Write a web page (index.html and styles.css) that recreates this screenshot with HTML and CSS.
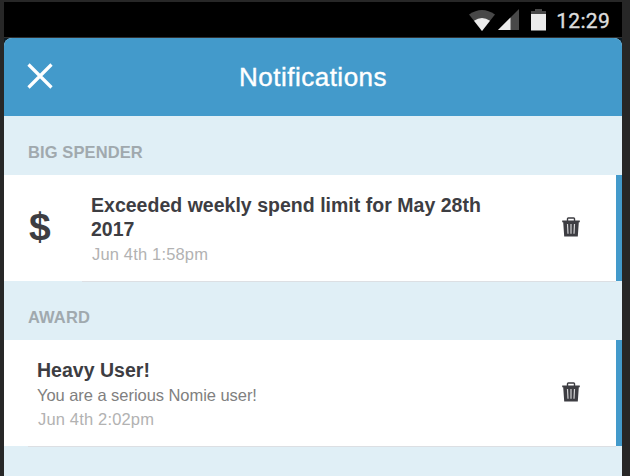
FILE: index.html
```html
<!DOCTYPE html>
<html lang="en">
<head>
    <meta charset="UTF-8">
    <meta name="viewport" content="width=device-width, initial-scale=1.0">
    <title>Notifications</title>
    <link rel="stylesheet" href="styles.css">
</head>
<body>
    <div class="phone">
        <div class="status-bar">
            <svg class="wifi" width="26" height="21" viewBox="0 0 26 21">
                <path fill="#484848" d="M0 4.5Q13 -4.5 26 4.5L13 21z"/>
                <path fill="#ebebeb" d="M5 10.8Q13 5.4 21 10.8L13 21z"/>
            </svg>
            <svg class="signal" width="21" height="21" viewBox="0 0 21 21">
                <path fill="#484848" d="M21 0V21H0z"/>
                <path fill="#ebebeb" d="M12.5 8.5V21H0z"/>
            </svg>
            <svg class="battery" width="15" height="22" viewBox="0 0 15 22">
                <path fill="#484848" d="M0 2h4V0h7v2h4v4H0z"/>
                <path fill="#ebebeb" d="M0 5h15v16.5H0z"/>
            </svg>
            <span class="clock">12:29</span>
        </div>
        <div class="screen">
            <header>
                <svg class="close" width="26" height="26" viewBox="0 0 26 26">
                    <path d="M1.5 1.5L24.5 24.5M24.5 1.5L1.5 24.5" stroke="#fff" stroke-width="3.2"/>
                </svg>
                <h1>Notifications</h1>
            </header>
            <section>
                <h2>BIG SPENDER</h2>
                <div class="item with-icon">
                    <div class="icon">$</div>
                    <div class="text">
                        <h3>Exceeded weekly spend limit for May 28th 2017</h3>
                        <p class="date">Jun 4th 1:58pm</p>
                    </div>
                    <svg class="trash" width="18" height="20" viewBox="0 0 18 20">
                        <path d="M5.5 4V1.8Q5.5 1 6.3 1h5.4q.8 0 .8.8V4" fill="none" stroke="#3d3d42" stroke-width="1.4"/>
                        <path d="M.2 3.4h17.6v1.8h-1L15.8 19.5H2.2L1.2 5.2h-1z" fill="#3d3d42"/>
                        <path d="M5.5 7l.5 9.8M9 7v9.8M12.5 7L12 16.8" stroke="#d4d4d6" stroke-width="1.2"/>
                    </svg>
                </div>
                <div class="line inset"></div>
            </section>
            <section>
                <h2 class="after-line">AWARD</h2>
                <div class="item">
                    <div class="text">
                        <h3>Heavy User!</h3>
                        <p class="desc">You are a serious Nomie user!</p>
                        <p class="date">Jun 4th 2:02pm</p>
                    </div>
                    <svg class="trash" width="18" height="20" viewBox="0 0 18 20">
                        <path d="M5.5 4V1.8Q5.5 1 6.3 1h5.4q.8 0 .8.8V4" fill="none" stroke="#3d3d42" stroke-width="1.4"/>
                        <path d="M.2 3.4h17.6v1.8h-1L15.8 19.5H2.2L1.2 5.2h-1z" fill="#3d3d42"/>
                        <path d="M5.5 7l.5 9.8M9 7v9.8M12.5 7L12 16.8" stroke="#d4d4d6" stroke-width="1.2"/>
                    </svg>
                </div>
                <div class="line"></div>
            </section>
        </div>
    </div>
</body>
</html>
```
FILE: styles.css
```css
* {
    box-sizing: border-box;
}
body {
    font-family: "Liberation Sans", Arial, sans-serif;
    margin: 0;
    padding: 2px 8px 0 4px;
    height: 476px;
    overflow: hidden;
    background-color: #272727;
}
h1, h2, h3, p {
    margin: 0;
}
.phone {
    height: 474px;
    background-color: #0c1c26;
}
.status-bar {
    display: flex;
    align-items: center;
    justify-content: flex-end;
    height: 36px;
    padding: 2px 12px 0 0;
    background-color: #000;
    border-bottom: 1px solid #303030;
}
.wifi, .battery {
    margin-bottom: 1px;
}
.signal {
    margin: 0 0 2px 3px;
}
.battery {
    margin-left: 12px;
}
.clock {
    margin-left: 10px;
    font-family: Roboto, sans-serif;
    font-size: 21px;
    letter-spacing: 0.3px;
    line-height: 24px;
    color: #dcdcdc;
    -webkit-text-stroke: 0.4px #dcdcdc;
}
.screen {
    height: 438px;
    border-radius: 8px 8px 0 0;
    overflow: hidden;
    background-color: #e0eff6;
}
header {
    display: grid;
    grid-template-columns: 72px 1fr 72px;
    align-items: center;
    height: 78px;
    background-color: #439acb;
}
.close {
    margin: 0 0 2px 23px;
}
h1 {
    color: #fff;
    font-size: 26px;
    font-weight: normal;
    letter-spacing: 0.5px;
    text-align: center;
    -webkit-text-stroke: 0.4px #fff;
}
h2 {
    height: 59px;
    padding: 7px 24px 0;
    line-height: 59px;
    font-size: 16.5px;
    letter-spacing: 0.1px;
    color: #a0a9ae;
}
.after-line {
    height: 58px;
    padding-top: 6px;
}
.item {
    display: flex;
    align-items: center;
    height: 106px;
    padding: 0 36px 0 33px;
    background-color: #fff;
    border-right: 6px solid #439acb;
}
.with-icon {
    padding-left: 25px;
}
.icon {
    width: 62px;
    padding-bottom: 3px;
    font-size: 39px;
    font-weight: bold;
    color: #3d3d42;
}
.text {
    flex: 1;
    padding: 4px 60px 0 0;
}
.trash {
    margin-bottom: 2px;
}
h3 {
    margin-bottom: 1px;
    font-size: 19.5px;
    line-height: 24px;
    letter-spacing: 0.02px;
    color: #3d3d42;
}
.desc {
    font-size: 16.5px;
    line-height: 24px;
    letter-spacing: -0.05px;
    color: #808080;
}
.date {
    padding-left: 1px;
    font-size: 16.5px;
    line-height: 25px;
    letter-spacing: 0.17px;
    color: #b2b2b2;
}
.line {
    height: 1px;
    margin: 0 6px 0 24px;
    background-color: #dcdfe3;
}
.inset {
    margin-left: 78px;
}
```
